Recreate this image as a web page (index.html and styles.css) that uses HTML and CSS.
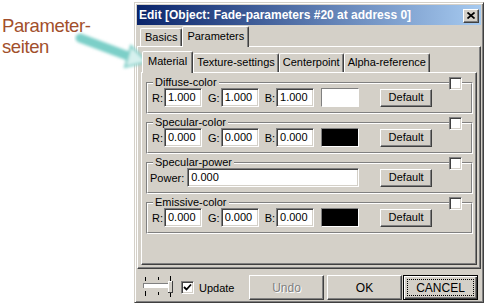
FILE: index.html
```html
<!DOCTYPE html>
<html lang="de">
<head>
    <meta charset="UTF-8">
    <meta name="viewport" content="width=device-width, initial-scale=1.0">
    <title>Edit [Object: Fade-parameters #20 at address 0]</title>
    <link rel="stylesheet" href="styles.css">
</head>
<body>
<div class="page">
    <div class="note">Parameter-<br>seiten</div>

    <!-- Pfeil zur Registerkarte -->
    <svg class="arrow" width="80" height="46" viewBox="0 0 80 46">
        <defs>
            <filter id="soft" x="-30%" y="-30%" width="160%" height="160%">
                <feGaussianBlur stdDeviation="1.5"/>
            </filter>
        </defs>
        <g filter="url(#soft)">
            <path d="M6 8 L54 26" stroke="#7ccfc8" stroke-width="9" stroke-linecap="round"/>
            <polygon points="57,16 51,37 73,32" fill="#d6f1ee" stroke="#7ccfc8" stroke-width="2"/>
        </g>
    </svg>

    <div class="window">
        <div class="titlebar">
            <span class="title">Edit [Object: Fade-parameters #20 at address 0]</span>
            <span class="close btn">
                <svg width="8" height="7" viewBox="0 0 8 7"><path d="M0.5 0.5 L7.5 6.5 M7.5 0.5 L0.5 6.5" stroke="#000" stroke-width="1.7"/></svg>
            </span>
        </div>

        <div class="tabs outer-tabs">
            <div class="tab">Basics</div>
            <div class="tab active">Parameters</div>
        </div>

        <div class="panel outer-panel">
            <div class="tabs inner-tabs">
                <div class="tab active">Material</div>
                <div class="tab">Texture-settings</div>
                <div class="tab">Centerpoint</div>
                <div class="tab">Alpha-reference</div>
            </div>

            <div class="panel inner-panel">
                <div class="group">
                    <div class="group-body">
                        <div class="group-head"><span class="legend">Diffuse-color</span><span class="checkbox"></span></div>
                        <div class="row">
                            <label>R:</label><span class="field">1.000</span>
                            <label>G:</label><span class="field">1.000</span>
                            <label>B:</label><span class="field">1.000</span>
                            <span class="swatch white"></span>
                            <span class="btn small">Default</span>
                        </div>
                    </div>
                </div>

                <div class="group">
                    <div class="group-body">
                        <div class="group-head"><span class="legend">Specular-color</span><span class="checkbox"></span></div>
                        <div class="row">
                            <label>R:</label><span class="field">0.000</span>
                            <label>G:</label><span class="field">0.000</span>
                            <label>B:</label><span class="field">0.000</span>
                            <span class="swatch black"></span>
                            <span class="btn small">Default</span>
                        </div>
                    </div>
                </div>

                <div class="group">
                    <div class="group-body">
                        <div class="group-head"><span class="legend">Specular-power</span><span class="checkbox"></span></div>
                        <div class="row power">
                            <label>Power:</label><span class="field wide">0.000</span>
                            <span class="btn small">Default</span>
                        </div>
                    </div>
                </div>

                <div class="group">
                    <div class="group-body">
                        <div class="group-head"><span class="legend">Emissive-color</span><span class="checkbox"></span></div>
                        <div class="row">
                            <label>R:</label><span class="field">0.000</span>
                            <label>G:</label><span class="field">0.000</span>
                            <label>B:</label><span class="field">0.000</span>
                            <span class="swatch black"></span>
                            <span class="btn small">Default</span>
                        </div>
                    </div>
                </div>
            </div>
        </div>

        <div class="footer">
            <svg class="slider" width="32" height="22" viewBox="0 0 32 22">
                <g fill="#000">
                    <rect x="3" y="2" width="1" height="4"/>
                    <rect x="16" y="2" width="1" height="3"/>
                    <rect x="28" y="1" width="1" height="5"/>
                    <rect x="3" y="16" width="1" height="5"/>
                    <rect x="16" y="17" width="1" height="3"/>
                    <rect x="28" y="18" width="1" height="4"/>
                </g>
                <rect x="1" y="8" width="26" height="5" fill="#fff"/>
                <rect x="1" y="8" width="26" height="1" fill="#808080"/>
                <rect x="1" y="8" width="1" height="5" fill="#808080"/>
                <rect x="26" y="6" width="5" height="12" fill="#d4d0c8"/>
                <rect x="26" y="6" width="5" height="1" fill="#fff"/>
                <rect x="26" y="6" width="1" height="12" fill="#fff"/>
                <rect x="30" y="6" width="1" height="12" fill="#404040"/>
                <rect x="26" y="17" width="5" height="1" fill="#404040"/>
            </svg>
            <span class="checkbox checked">
                <svg width="9" height="9" viewBox="0 0 9 9"><path d="M1 4 L3.5 6.5 L8 1.5" fill="none" stroke="#000" stroke-width="1.8"/></svg>
            </span>
            <span class="update">Update</span>
            <span class="btn big disabled">Undo</span>
            <span class="btn big">OK</span>
            <span class="btn big default">CANCEL</span>
        </div>
    </div>
</div>
</body>
</html>
```

FILE: styles.css
```css
* {
    box-sizing: border-box;
}

body {
    margin: 0;
    background: #fff;
    font-family: "Liberation Sans", Arial, sans-serif;
    font-size: 11px;
    color: #000;
}

.page {
    position: relative;
    display: flex;
    width: 491px;
    height: 307px;
}

.note {
    width: 134px;
    padding: 15px 0 0 2px;
    font-size: 18.5px;
    letter-spacing: -0.4px;
    line-height: 21px;
    color: #a24f2b;
}

.arrow {
    position: absolute;
    left: 74px;
    top: 30px;
}

/* Fenster */

.window {
    display: flex;
    flex-direction: column;
    width: 350px;
    height: 301px;
    margin-top: 2px;
    padding: 2px;
    background: #d4d0c8;
    border: 1px solid;
    border-color: #d4d0c8 #404040 #404040 #d4d0c8;
    box-shadow: inset 1px 1px #fff, inset -1px -1px #808080;
}

.titlebar {
    display: flex;
    align-items: center;
    height: 20px;
    padding: 0 2px;
    background: linear-gradient(to right, #0a246a, #a6caf0);
}

.title {
    flex: 1;
    font-size: 12px;
    font-weight: bold;
    color: #fff;
    white-space: nowrap;
}

.btn {
    display: flex;
    align-items: center;
    justify-content: center;
    background: #d4d0c8;
    border: 1px solid;
    border-color: #fff #404040 #404040 #fff;
    box-shadow: inset -1px -1px #808080;
}

.close {
    width: 16px;
    height: 14px;
    margin-top: 2px;
    padding: 0 1px 1px 0;
}

/* Registerkarten */

.tabs {
    display: flex;
    align-items: flex-end;
}

.outer-tabs {
    height: 21px;
    padding-left: 3px;
}

.inner-tabs {
    padding-left: 1px;
}

.tab {
    height: 18px;
    padding: 0 4px;
    line-height: 16px;
    border: 1px solid;
    border-bottom: 0;
    border-color: #fff #404040 transparent #fff;
    border-radius: 2px 2px 0 0;
    box-shadow: inset -1px 0 #808080;
    white-space: nowrap;
}

.tab.active {
    position: relative;
    height: 21px;
    margin-bottom: -1px;
    padding: 0 4px;
    line-height: 18px;
    background: #d4d0c8;
}

.inner-tabs .tab {
    height: 19px;
    padding: 0 3px;
}

.inner-tabs .tab.active {
    height: 22px;
    padding: 0 5px;
}

.panel {
    border: 1px solid;
    border-color: #fff #404040 #404040 #fff;
    box-shadow: inset -1px -1px #808080;
}

.outer-panel {
    flex: 1;
    display: flex;
    flex-direction: column;
    padding: 4px 3px 3px 3px;
}

.inner-panel {
    flex: 1;
    padding: 1px 3px 0 4px;
}

/* Gruppen */

.group {
    margin-top: 8px;
    border: 1px solid;
    border-color: #808080 #fff #fff #808080;
}

.group-body {
    padding: 0 4px 5px 4px;
    border: 1px solid;
    border-color: #fff #808080 #808080 #fff;
}

.group-head {
    display: flex;
    justify-content: space-between;
    height: 12px;
    margin-top: -8px;
}

.legend {
    margin-left: 1px;
    padding: 0 2px;
    line-height: 12px;
    background: #d4d0c8;
}

.checkbox {
    display: flex;
    align-items: center;
    justify-content: center;
    width: 13px;
    height: 13px;
    margin: 1px 5px 0 0;
    background: #fff;
    border: 1px solid;
    border-color: #808080 #fff #fff #808080;
    box-shadow: inset 1px 1px #404040, inset -1px -1px #d4d0c8;
}

.row {
    display: flex;
    align-items: center;
    height: 19px;
}

.row label {
    margin-right: 1px;
}

.field + label {
    margin-left: 6px;
}

.power {
    margin-left: -2px;
}

.power label {
    margin-right: 3px;
}

.field {
    width: 38px;
    height: 19px;
    padding: 0 0 0 3px;
    line-height: 17px;
    background: #fff;
    border: 1px solid;
    border-color: #808080 #fff #fff #808080;
    box-shadow: inset 1px 1px #404040, inset -1px -1px #d4d0c8;
}

.field.wide {
    width: 172px;
}

.swatch {
    width: 38px;
    height: 19px;
    margin-left: 7px;
    border: 1px solid;
    border-color: #808080 #fff #fff #808080;
}

.swatch.white {
    background: #fff;
}

.swatch.black {
    background: #000;
}

.btn.small {
    width: 52px;
    height: 18px;
    margin-left: 21px;
    padding-bottom: 1px;
}

/* Fußleiste */

.footer {
    display: flex;
    align-items: center;
    height: 31px;
    padding: 6px 3px 0 5px;
}

.slider {
    margin-top: -4px;
}

.footer .checkbox {
    margin: 0 0 0 7px;
}

.update {
    margin-left: 5px;
}

.btn.big {
    width: 75px;
    height: 25px;
    margin-left: 3px;
    font-size: 12px;
}

.btn.disabled {
    margin-left: auto;
    color: #808080;
    text-shadow: 1px 1px #fff;
}

.btn.default {
    margin-left: 1px;
    border-color: #000;
    box-shadow: inset 1px 1px #fff, inset -1px -1px #404040, inset -2px -2px #808080;
    outline: 1px dotted #000;
    outline-offset: -5px;
}
```
